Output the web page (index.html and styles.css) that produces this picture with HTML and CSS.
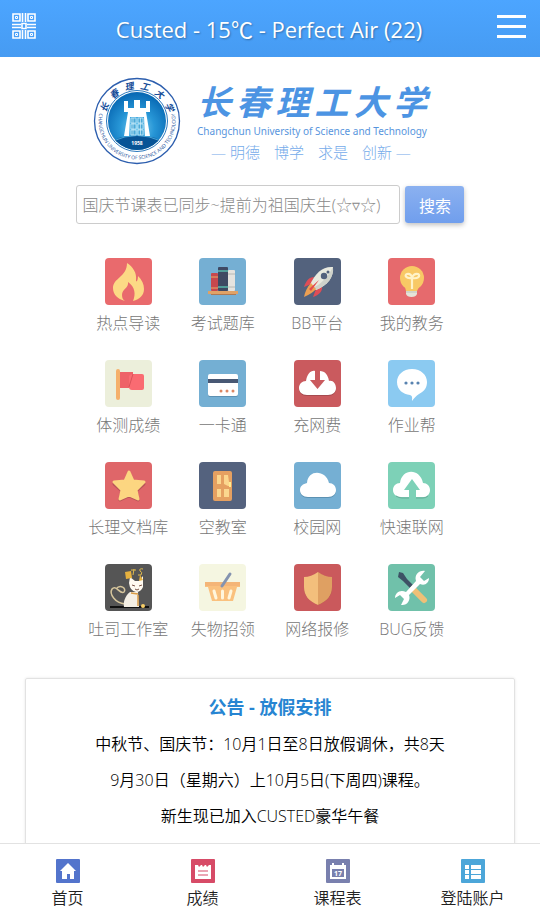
FILE: index.html
```
<!DOCTYPE html>
<html lang="zh-CN">
<head>
    <meta charset="utf-8">
    <meta name="viewport" content="width=device-width, initial-scale=1">
    <title>Custed</title>
    <link rel="stylesheet" href="styles.css">
</head>
<body>
<header class="topbar">
    <a class="qr" href="#qr" aria-label="二维码">
        <svg width="24" height="26" viewBox="0 0 24 26" fill="none" stroke="currentColor" stroke-width="1.6">
            <path d="M1 1h7v7H1zM16 1h7v7h-7zM1 18h7v7H1zM16 18h7v7h-7zM10.500 0v9M13.500 0v9M10.500 17v9M13.500 17v9M0 11.500h9M0 14.500h9M15 11.500h9M15 14.500h9M10 10.500h4v5h-4z"/>
            <path d="M3.500 3.500h2v2h-2zM18.500 3.500h2v2h-2zM3.500 20.500h2v2h-2zM18.500 20.500h2v2h-2z" stroke-width="1"/>
        </svg>
    </a>
    <h1>Custed - 15℃ - Perfect Air (22)</h1>
    <button class="menu" type="button" aria-label="菜单"><span></span><span></span><span></span></button>
</header>
<main>
    <div class="brand">
        <svg class="seal" viewBox="0 0 88 88">
            <defs>
                <radialGradient id="sky" cx="50%" cy="62%" r="60%">
                    <stop offset="0" stop-color="#7ed0f2"/>
                    <stop offset="0.5" stop-color="#2796d6"/>
                    <stop offset="1" stop-color="#0869b4"/>
                </radialGradient>
                <clipPath id="disc"><circle cx="44" cy="44" r="29"/></clipPath>
                <path id="ring" d="M6.300 36a38.500 38.500 0 1 0 75.400 0"/>
            </defs>
            <circle cx="44" cy="44" r="42.500" fill="#fff" stroke="#2c5eae" stroke-width="1.300"/>
            <circle cx="44" cy="44" r="30.500" fill="#fff" stroke="#2b79bd" stroke-width="1"/>
            <circle cx="44" cy="44" r="29" fill="url(#sky)"/>
            <g clip-path="url(#disc)">
                <path d="M12 67Q44 50 76 67V80H12z" fill="#075496"/>
                <path d="M20 64Q44 53 68 64" fill="none" stroke="#48a5d8" stroke-width="1"/>
            </g>
            <path d="M31 24h4v7h6v-8h6v8h6v-7h4v11H31zM35 35h18l4 24h-5l-1-19H37l-1 19h-5z" fill="#fff"/>
            <path d="M38 41h5v5h-5zM45 41h5v5h-5zM38 47h5v5h-5zM45 47h5v5h-5zM38 53h5v5h-5zM45 53h5v5h-5zM40 41v17M47.500 41v17" fill="#4aa9d8" stroke="#d3effa" stroke-width="0.700"/>
            <text class="seal-year" x="44" y="68">1958</text>
            <g class="seal-name">
                <text x="44" y="12" transform="rotate(-67 44 44)">长</text>
                <text x="44" y="12" transform="rotate(-40 44 44)">春</text>
                <text x="44" y="12" transform="rotate(-13 44 44)">理</text>
                <text x="44" y="12" transform="rotate(13 44 44)">工</text>
                <text x="44" y="12" transform="rotate(40 44 44)">大</text>
                <text x="44" y="12" transform="rotate(67 44 44)">学</text>
            </g>
            <text class="seal-latin"><textPath href="#ring" startOffset="50%">CHANGCHUN UNIVERSITY OF SCIENCE AND TECHNOLOGY</textPath></text>
        </svg>
        <div class="wordmark">
            <div class="name"><span>长</span><span>春</span><span>理</span><span>工</span><span>大</span><span>学</span></div>
            <div class="latin">Changchun University of Science and Technology</div>
            <div class="motto"><span>— 明德</span><span>博学</span><span>求是</span><span>创新 —</span></div>
        </div>
    </div>

    <form class="search">
        <input type="text" aria-label="搜索" placeholder="国庆节课表已同步~提前为祖国庆生(☆▿☆)">
        <button type="submit">搜索</button>
    </form>

    <nav class="apps">
        <a href="#news">
            <svg viewBox="0 0 47 47"><rect width="47" height="47" rx="4" fill="#e96a6d"/>
                <path d="M22 5C28 9 32 15 31 22C31 25 33 23 33 18C37 22 39 26 39 31C39 37 35 41 28 43C31 36 30 29 23 24C24 30 17 31 17 37C17 40 18 42 20 43C12 41 8 36 8 30C8 20 22 19 22 5z" fill="#fcd985"/></svg>
            热点导读
        </a>
        <a href="#exam">
            <svg viewBox="0 0 47 47"><rect width="47" height="47" rx="4" fill="#75afd3"/>
                <rect x="12" y="15" width="7" height="18" rx="1" fill="#c6484d"/><rect x="19" y="9" width="10" height="24" rx="1" fill="#3f4963"/><rect x="29" y="12" width="7" height="21" rx="1" fill="#e5e3df"/>
                <path d="M12 19h7M12 30h7" stroke="#e7ad68"/><path d="M19 13h10M19 29h10" stroke="#58b8ac" stroke-width="1.500"/><path d="M29 16h7M29 29h7" stroke="#b6b8b4"/>
                <path d="M9 33h30v3H9z" fill="#dfa267"/><path d="M12 36h25v1H12z" fill="#ad7953"/></svg>
            考试题库
        </a>
        <a href="#bb">
            <svg viewBox="0 0 47 47"><rect width="47" height="47" rx="4" fill="#53627d"/>
                <path d="M20 19C15 19 12 23 10 29L17 26zM28 28C29 33 25 37 19 39L22 31z" fill="#df4d56"/>
                <path d="M39 9C29 8 21 15 16 27L22 32C34 27 40 19 39 9z" fill="#e9eadf"/><path d="M39 9C34 19 27 26 19 30L22 32C34 27 40 19 39 9z" fill="#cfd2ca"/>
                <circle cx="30" cy="18" r="3.200" fill="#53627d"/><circle cx="34" cy="14" r="1.500" fill="#53627d"/>
                <path d="M17 25C13 29 11 34 10 39C16 36 20 34 22 31z" fill="#eda052"/><path d="M25 22L15 31L17 33z" fill="#e44b50"/></svg>
            BB平台
        </a>
        <a href="#affairs">
            <svg viewBox="0 0 47 47"><rect width="47" height="47" rx="4" fill="#e66a6d"/>
                <path d="M18 31h11v5q-1 3-5.500 3T18 36z" fill="#e5e4d9"/><path d="M18 34h11" stroke="#bfc5bd"/>
                <circle cx="24" cy="20" r="12" fill="#f8c965"/><path d="M17 29h14l-2 4H18z" fill="#f8c965"/>
                <path d="M24 31V20C18 21 16 17 19 16C22 15 24 18 24 20C24 18 27 15 30 16C33 18 30 21 24 20" fill="none" stroke="#fff3c8" stroke-width="2.200"/></svg>
            我的教务
        </a>
        <a href="#fitness">
            <svg viewBox="0 0 47 47"><rect width="47" height="47" rx="4" fill="#ecefdb"/>
                <path d="M14 12h14v16H14z" fill="#ee6268"/><path d="M24 16q1-2 4-2h9q2 0 2 2v12q0 2-2 2H27q-3 0-3-3z" fill="#fa6b72"/><path d="M24 27l4-13" stroke="#d95359"/><rect x="11" y="9" width="4" height="31" rx="2" fill="#f5b06b"/></svg>
            体测成绩
        </a>
        <a href="#card">
            <svg viewBox="0 0 47 47"><rect width="47" height="47" rx="4" fill="#74afd3"/>
                <rect x="9" y="15" width="30" height="22" rx="2" fill="#5c91b3"/><rect x="9" y="14" width="30" height="22" rx="2" fill="#fff"/><path d="M9 19h30v4H9z" fill="#485874"/>
                <circle cx="22" cy="31" r="1.500" fill="#dc8763"/><circle cx="28" cy="31" r="1.500" fill="#dc8763"/><circle cx="34" cy="31" r="1.500" fill="#dc8763"/></svg>
            一卡通
        </a>
        <a href="#netfee">
            <svg viewBox="0 0 47 47"><rect width="47" height="47" rx="4" fill="#ca5a5e"/>
                <path d="M13 36C8 36 5 33 5 29C5 25 8 22 12 22C13 15 17 11 21 11V20H16L23.500 30L31 20H26V11C31 12 34 16 35 22C39 21 42 25 42 29C42 33 39 36 34 36z" fill="#a64a4f"/>
                <path d="M13 35C8 35 5 32 5 28C5 24 8 21 12 21C13 14 17 10 21 11V20H16L23.500 29L31 20H26V11C31 11 34 15 35 21C39 20 42 24 42 28C42 32 39 35 34 35z" fill="#fff"/></svg>
            充网费
        </a>
        <a href="#homework">
            <svg viewBox="0 0 47 47"><rect width="47" height="47" rx="4" fill="#8bcaf1"/>
                <path d="M24 9C15 9 9 15 9 22C9 30 15 34 22 35C25 36 24 39 24 41C26 38 28 36 31 34C37 31 39 27 39 22C39 15 33 9 24 9z" fill="#fff"/><circle cx="18" cy="23" r="1.600" fill="#5883b0"/><circle cx="24" cy="23" r="1.600" fill="#5883b0"/><circle cx="30" cy="23" r="1.600" fill="#5883b0"/></svg>
            作业帮
        </a>
        <a href="#docs">
            <svg viewBox="0 0 47 47"><rect width="47" height="47" rx="4" fill="#df6669"/>
                <path d="M24 11l4 10 11 1-8 7 2 9-9-4-9 4 2-9-8-7 11-1z" fill="#b95559" stroke="#b95559" stroke-width="3" stroke-linejoin="round"/><path d="M24 10l4 9 11 1-8 8 2 9-9-4-9 4 2-9-8-8 11-1z" fill="#fcd681" stroke="#fcd681" stroke-width="3" stroke-linejoin="round"/></svg>
            长理文档库
        </a>
        <a href="#rooms">
            <svg viewBox="0 0 47 47"><rect width="47" height="47" rx="4" fill="#54627e"/>
                <rect x="14" y="9" width="19" height="30" rx="2" fill="#e5a061"/><path d="M18 13h4v9h-4zM25 13h4l1 7 2 4h-3l-4-2zM18 27h4v8h-4zM25 27h5v8h-5z" fill="#fbd68e"/><path d="M30 20h2v5h-2z" fill="#ffed91"/></svg>
            空教室
        </a>
        <a href="#campus">
            <svg viewBox="0 0 47 47"><rect width="47" height="47" rx="4" fill="#75afd3"/>
                <path d="M14 36C9 36 6 33 6 29C6 25 9 22 13 22C15 8 32 8 35 22C39 21 42 25 42 29C42 33 39 36 34 36z" fill="#5b91b2"/><path d="M14 35C9 35 6 32 6 28C6 24 9 22 13 21C14 7 32 8 35 21C39 21 42 24 42 28C42 32 39 35 34 35z" fill="#fff"/></svg>
            校园网
        </a>
        <a href="#connect">
            <svg viewBox="0 0 47 47"><rect width="47" height="47" rx="4" fill="#7dd1b7"/>
                <path d="M13 35C8 35 5 32 5 28C5 24 8 21 12 21C14 6 32 6 35 21C39 21 42 24 42 28C42 32 39 35 36 35H28V28H32L24 17L16 28H21V35z" fill="#fff"/><path d="M8 34q3 2 6 2h7M28 36h7q3 0 5-2" fill="none" stroke="#67aa98"/></svg>
            快速联网
        </a>
        <a href="#studio">
            <svg viewBox="0 0 47 47"><rect width="47" height="47" rx="4" fill="#555"/>
                <path d="M5 43h39" stroke="#111" stroke-width="2"/>
                <path d="M20 40C10 39 4 30 7 25C11 20 15 31 19 28C22 24 15 20 11 25" fill="none" stroke="#d7c69c" stroke-width="1.500"/>
                <path d="M25 28C20 32 18 38 19 43H34L33 28z" fill="#f4efe4"/><path d="M24 19l1-6 5 4h4l4-5v11q-2 5-7 5-6-1-7-9z" fill="#fffaf1"/>
                <path d="M20 8l6-1 1 7-6 1zM35 11l3 5-4 1z" fill="#e6b13f"/><path d="M27 21l3 1M34 22l3-1M30 25q2 2 4 0" stroke="#795244" fill="none"/><path d="M26 29l7 1M33 31v11" stroke="#d99c45" stroke-width="1.500"/><circle cx="38" cy="42" r="2" fill="#f7ce67"/><path d="M26 6h5M29 5l-1 6M38 5q-4-1-3 2 3 1 1 4h-3" fill="none" stroke="#e2bc4e"/></svg>
            吐司工作室
        </a>
        <a href="#lost">
            <svg viewBox="0 0 47 47"><rect width="47" height="47" rx="4" fill="#f5f6e1"/>
                <path d="M6 18h35v5h-3l-4 14H13L9 23H6z" fill="#fac17e"/><path d="M6 18h35v4H6z" fill="#f4b577"/><path d="M15 27l2 7M23.500 27v7M32 27l-2 7" stroke="#fff6dd" stroke-width="3" stroke-linecap="round"/><path d="M23 22l8-12" stroke="#8493b0" stroke-width="3" stroke-linecap="round"/></svg>
            失物招领
        </a>
        <a href="#repair">
            <svg viewBox="0 0 47 47"><rect width="47" height="47" rx="4" fill="#ca595c"/>
                <path d="M24 9L38 15V24C38 32 33 37 24 41C15 37 10 32 10 24V15z" fill="#a9494b"/><path d="M24 8Q17 13 10 13V23C10 32 15 37 24 41z" fill="#f3bf7c"/><path d="M24 8Q31 13 38 13V23C38 32 33 37 24 41z" fill="#dfa062"/></svg>
            网络报修
        </a>
        <a href="#feedback">
            <svg viewBox="0 0 47 47"><rect width="47" height="47" rx="4" fill="#70c1aa"/>
                <path d="M11 8l4 1 4 6 6 6-3 3-7-7-5-4z" fill="#3d5265"/><path d="M25 25l11 11" stroke="#efc077" stroke-width="6" stroke-linecap="round"/>
                <path d="M37 7C31 6 26 11 28 17L18 28C12 25 7 29 7 34L12 31L16 35L13 41C19 42 23 36 21 31L32 20C37 22 41 19 41 14L36 17L32 13z" fill="#fff"/></svg>
            BUG反馈
        </a>
    </nav>

    <section class="notice">
        <h2>公告 - 放假安排</h2>
        <p>中秋节、国庆节：10月1日至8日放假调休，共8天</p>
        <p>9月30日（星期六）上10月5日(下周四)课程。</p>
        <p>新生现已加入CUSTED豪华午餐</p>
    </section>
</main>
<nav class="tabbar">
    <a href="#home">
        <svg viewBox="0 0 24 24"><rect width="24" height="24" rx="1" fill="#5374cc"/><path d="M12 4l8 8h-2v8h-4v-5h-3v5H6v-8H4z" fill="#fff"/></svg>
        首页
    </a>
    <a href="#grades">
        <svg viewBox="0 0 24 24"><rect width="24" height="24" rx="1" fill="#d74b67"/><path d="M4 6h3l1 2 2-2h1l1 2 2-2h1l1 2 2-2h2v14H4z" fill="#fff"/><path d="M7 12h10M7 16h10" stroke="#d74b67"/></svg>
        成绩
    </a>
    <a href="#timetable">
        <svg viewBox="0 0 24 24"><rect width="24" height="24" rx="1" fill="#7980ae"/><path d="M4 6h16v14H4z" fill="#fff"/><path d="M7 4v3M17 4v3" stroke="#fff" stroke-width="2"/><path d="M6 10h12v8H6z" fill="#7980ae"/><text class="day" x="12" y="17">17</text></svg>
        课程表
    </a>
    <a href="#account">
        <svg viewBox="0 0 24 24"><rect width="24" height="24" rx="1" fill="#4ca6d9"/><path d="M4 6h4v4H4zM10 6h10v4H10zM4 11h4v4H4zM10 11h10v4H10zM4 16h4v4H4zM10 16h10v4H10z" fill="#fff"/></svg>
        登陆账户
    </a>
</nav>
</body>
</html>
```

FILE: styles.css
```
* {
    box-sizing: border-box;
}

body {
    margin: 0;
    height: 100vh;
    display: flex;
    flex-direction: column;
    background: #fff;
    color: #000;
    font-family: "Open Sans", "Noto Sans CJK SC", sans-serif;
    font-size: 16px;
}

a {
    text-decoration: none;
    color: inherit;
}

.topbar {
    display: flex;
    align-items: center;
    justify-content: space-between;
    flex: none;
    height: 57px;
    padding: 0 14px 0 12px;
    background: linear-gradient(#4ca5ff, #469bf2);
    color: #fff;
}

.topbar h1 {
    margin: 0;
    font-size: 22px;
    font-weight: 400;
    line-height: 28px;
    text-shadow: 1px 1px 2px rgba(0, 0, 0, 0.3);
}

.qr {
    display: flex;
    width: 29px;
    padding-bottom: 6px;
}

.menu {
    display: flex;
    flex-direction: column;
    gap: 7px;
    width: 29px;
    padding: 0 0 4px;
    border: 0;
    background: none;
}

.menu span {
    width: 100%;
    height: 3px;
    background: #fff;
}

main {
    flex: 1;
    min-height: 0;
    overflow-y: auto;
    scrollbar-width: none;
}

.brand {
    display: flex;
    justify-content: center;
    gap: 16px;
    padding: 20px 20px 0 0;
}

.seal {
    width: 88px;
    height: 88px;
    flex: none;
}

.seal text {
    fill: #174d98;
    text-anchor: middle;
}

.seal .seal-year {
    fill: #fff;
    font-size: 5px;
    font-weight: 700;
}

.seal-name {
    font-family: "Noto Sans CJK SC", sans-serif;
    font-size: 9px;
    font-style: italic;
    font-weight: 700;
}

.seal-latin {
    font-size: 5px;
    font-weight: 400;
}

.wordmark {
    padding-top: 6px;
    color: #5795dd;
    white-space: nowrap;
}

.name {
    display: flex;
    justify-content: space-between;
    font-size: 34px;
    font-style: italic;
    font-weight: 700;
    line-height: 38px;
    color: #4c94e3;
}

.latin {
    font-family: "Noto Sans", sans-serif;
    font-size: 10px;
    line-height: 20px;
}

.motto {
    display: flex;
    gap: 14px;
    padding-left: 14px;
    font-size: 15px;
    font-weight: 300;
    line-height: 22px;
    color: #75abea;
}

.search {
    display: flex;
    align-items: center;
    gap: 5px;
    width: 72%;
    margin: 20px auto 0;
}

.search input {
    flex: 1;
    min-width: 0;
    height: 39px;
    padding: 0 6px;
    border: 1px solid #ccc;
    border-radius: 3px;
    font: inherit;
    font-weight: 300;
}

.search input::placeholder {
    color: #888;
}

.search button {
    width: 59px;
    height: 37px;
    padding: 0;
    border: 0;
    border-radius: 3px;
    background: linear-gradient(#8bb1f0, #709eed);
    box-shadow: 0 2px 5px rgba(0, 0, 0, 0.25);
    color: #fff;
    font: inherit;
}

.apps {
    display: grid;
    grid-template-columns: repeat(4, 1fr);
    row-gap: 25px;
    width: 70%;
    margin: 34px auto 0;
}

.apps a {
    display: flex;
    flex-direction: column;
    align-items: center;
    gap: 6px;
    color: #777;
    font-weight: 300;
    line-height: 24px;
    white-space: nowrap;
}

.apps svg {
    width: 47px;
    height: 47px;
}

.notice {
    margin: 37px 25px 20px;
    padding: 9px 10px 20px;
    border: 1px solid #e2e2e2;
    border-radius: 2px;
    box-shadow: 0 0 3px rgba(0, 0, 0, 0.1);
    text-align: center;
}

.notice h2 {
    margin: 0;
    font-size: 18px;
    font-weight: 700;
    line-height: 38px;
    color: #2785d2;
}

.notice p {
    margin: 0;
    font-weight: 350;
    line-height: 36px;
}

.tabbar {
    display: flex;
    flex: none;
    height: 78px;
    padding-top: 15px;
    border-top: 1px solid #e2e2e2;
    background: #fff;
}

.tabbar a {
    display: flex;
    flex: 1;
    flex-direction: column;
    align-items: center;
    gap: 3px;
    color: #222;
    font-weight: 350;
    line-height: 24px;
}

.tabbar svg {
    width: 24px;
    height: 24px;
}

.day {
    fill: #fff;
    font-size: 7px;
    font-weight: 700;
    text-anchor: middle;
}
```
